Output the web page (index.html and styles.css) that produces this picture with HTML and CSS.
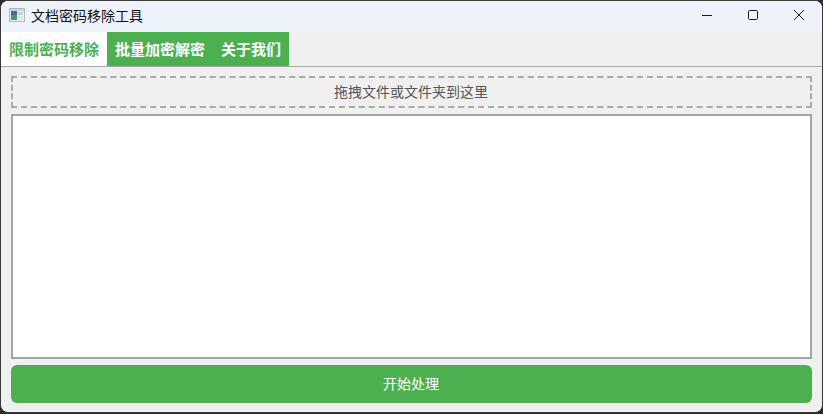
FILE: index.html
```html
<!DOCTYPE html>
<html lang="zh-CN">
<head>
  <title>文档密码移除工具</title>
  <meta charset="utf-8">
  <link rel="stylesheet" href="styles.css">
</head>
<body>
  <div class="window">
    <div class="titlebar">
      <svg class="app-icon" width="16" height="16" viewBox="0 0 16 16">
        <rect x="0.5" y="1.5" width="15" height="13" fill="#eef0f2" stroke="#b4b8bc"/>
        <rect x="1" y="2" width="14" height="2" fill="#cfd3d7"/>
        <rect x="2" y="4" width="6" height="9" fill="#4d8f86"/>
        <rect x="2" y="4" width="6" height="4" fill="#3d6f9e"/>
        <rect x="9" y="5" width="5" height="3" fill="#c5d8cf"/>
        <rect x="9" y="9" width="5" height="4" fill="#dfe5e2"/>
      </svg>
      <span class="title-text">文档密码移除工具</span>
      <div class="window-controls">
        <div class="win-btn">
          <svg width="12" height="12" viewBox="0 0 12 12"><path d="M1 6.5h10" stroke="#1a1a1a" fill="none"/></svg>
        </div>
        <div class="win-btn">
          <svg width="12" height="12" viewBox="0 0 12 12"><rect x="1.5" y="1.5" width="9" height="9" rx="1" stroke="#1a1a1a" fill="none"/></svg>
        </div>
        <div class="win-btn">
          <svg width="12" height="12" viewBox="0 0 12 12"><path d="M1 1l10 10M11 1L1 11" stroke="#1a1a1a" fill="none"/></svg>
        </div>
      </div>
    </div>
    <div class="tabs">
      <div class="tab active">限制密码移除</div>
      <div class="tab">批量加密解密</div>
      <div class="tab">关于我们</div>
    </div>
    <div class="content">
      <div class="drop-zone">拖拽文件或文件夹到这里</div>
      <div class="file-list"></div>
      <button class="start-btn">开始处理</button>
    </div>
  </div>
</body>
</html>
```

FILE: styles.css
```css
* {
    box-sizing: border-box;
}
html, body {
    margin: 0;
    height: 100%;
    background: #2b2b2b;
    overflow: hidden;
}
.window {
    display: flex;
    flex-direction: column;
    height: 413px;
    border: 1px solid #3a3a3a;
    border-radius: 8px;
    overflow: hidden;
    background: #f0f0f0;
    font-family: "Noto Sans CJK SC", "Liberation Sans", sans-serif;
}
.titlebar {
    display: flex;
    align-items: center;
    height: 31px;
    padding: 0 0 3px 8px;
    background: #eef2fb;
    flex-shrink: 0;
}
.app-icon {
    margin-right: 6px;
}
.title-text {
    font-size: 14px;
    line-height: 20px;
    color: #111;
}
.window-controls {
    display: flex;
    margin-left: auto;
}
.win-btn {
    display: flex;
    align-items: center;
    justify-content: center;
    width: 46px;
    height: 28px;
}
.tabs {
    display: flex;
    height: 35px;
    flex-shrink: 0;
    border-bottom: 1px solid #a8a8a8;
}
.tab {
    display: flex;
    align-items: center;
    padding: 0 8px 2px;
    font-size: 15px;
    font-weight: 700;
    color: #fff;
    background: #4caf50;
}
.tab.active {
    color: #4caf50;
    background: #fff;
}
.content {
    display: flex;
    flex-direction: column;
    flex: 1;
    gap: 6px;
    padding: 9px 10px 9px;
}
.drop-zone {
    display: flex;
    align-items: center;
    justify-content: center;
    height: 32px;
    padding: 0 1px 2px 0;
    border: 2px dashed #aaa;
    font-size: 14px;
    color: #555;
}
.file-list {
    flex: 1;
    border: 2px solid #a5a5a5;
    background: #fff;
}
.start-btn {
    height: 38px;
    padding: 0 1px 2px 0;
    border: 0;
    border-radius: 6px;
    background: #4caf50;
    color: #fff;
    font-family: inherit;
    font-size: 14px;
}
```
